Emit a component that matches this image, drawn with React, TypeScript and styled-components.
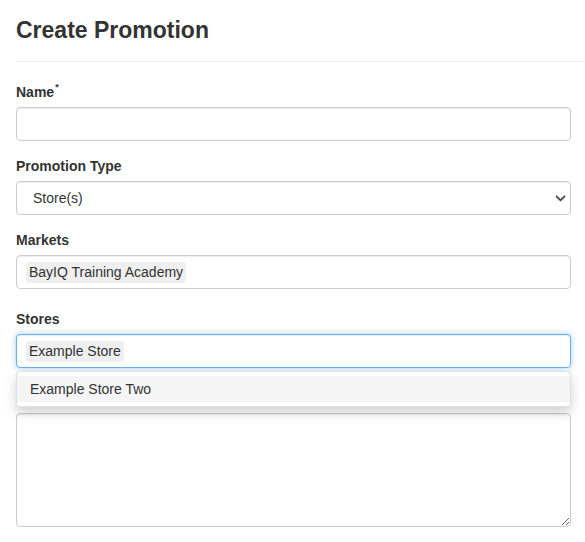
import React from 'react';
import styled, { createGlobalStyle, css } from 'styled-components';

const GlobalStyle = createGlobalStyle`
  html, body {
    margin: 0;
    padding: 0;
    background: #fff;
  }
  body {
    font-family: "Liberation Sans", Arial, Helvetica, sans-serif;
    font-size: 14px;
    line-height: 1.42857;
    color: #333;
  }
  * {
    box-sizing: border-box;
  }
`;

const Page = styled.div`
  padding-left: 16px;
`;

const Header = styled.div`
  padding: 17px 0 18px;
  border-bottom: 1px solid #eee;
`;

const Title = styled.h1`
  margin: 0;
  font-size: 23px;
  line-height: 26px;
  font-weight: 700;
  color: #333;
`;

const Form = styled.form`
  padding: 20px 14px 0 0;
  display: flex;
  flex-direction: column;
`;

const Group = styled.div<{ $gap?: number }>`
  position: relative;
  display: flex;
  flex-direction: column;
  margin-bottom: ${p => p.$gap ?? 15}px;
`;

const Label = styled.label`
  display: block;
  margin-bottom: 5px;
  font-weight: 700;
  line-height: 20px;
`;

const Required = styled.sup`
  font-size: 9px;
  line-height: 0;
  position: relative;
  top: -1px;
  margin-left: 1px;
`;

const fieldBase = css`
  width: 100%;
  border: 1px solid #ccc;
  border-radius: 4px;
  background: #fff;
  box-shadow: inset 0 1px 1px rgba(0, 0, 0, 0.075);
  font-family: inherit;
  font-size: 14px;
  color: #333;
`;

const TextInput = styled.input`
  ${fieldBase};
  height: 34px;
  padding: 6px 12px;
  outline: none;
`;

const SelectWrap = styled.div`
  ${fieldBase};
  height: 34px;
  display: flex;
  align-items: center;
  justify-content: space-between;
  padding: 0 4px 0 16px;
`;

const SelectValue = styled.span`
  line-height: 20px;
`;

const ChipField = styled.div<{ $focused?: boolean }>`
  ${fieldBase};
  height: 34px;
  display: flex;
  align-items: center;
  padding: 0 9px;
  ${p =>
    p.$focused &&
    css`
      border-color: #66afe9;
      box-shadow: inset 0 1px 1px rgba(0, 0, 0, 0.075),
        0 0 6px rgba(102, 175, 233, 0.6);
    `}
`;

const Chip = styled.span`
  display: inline-block;
  height: 21px;
  line-height: 21px;
  padding: 0 3px;
  background: #efefef;
  border-radius: 3px;
  color: #333;
`;

const Dropdown = styled.div`
  position: absolute;
  top: calc(100% + 3px);
  left: 0;
  right: 0;
  z-index: 10;
  padding: 4px 0;
  background: #fff;
  border: 1px solid rgba(0, 0, 0, 0.12);
  border-radius: 4px;
  box-shadow: 0 6px 12px rgba(0, 0, 0, 0.175);
`;

const Option = styled.div<{ $active?: boolean }>`
  height: 26px;
  line-height: 26px;
  padding: 0 13px;
  background: ${p => (p.$active ? '#f5f5f5' : '#fff')};
  color: #333;
`;

const TextArea = styled.textarea`
  ${fieldBase};
  display: block;
  height: 114px;
  padding: 6px 12px;
  resize: vertical;
  outline: none;
`;

const Chevron = () => (
  <svg width="11" height="7" viewBox="0 0 11 7" aria-hidden="true">
    <path d="M1.5 1.3 L5.5 5.3 L9.5 1.3" fill="none" stroke="#444" strokeWidth="1.8" strokeLinecap="round" strokeLinejoin="round" />
  </svg>
);

const App: React.FC = () => {
  return (
    <Page>
      <GlobalStyle />
      <Header>
        <Title>Create Promotion</Title>
      </Header>
      <Form onSubmit={e => e.preventDefault()}>
        <Group>
          <Label htmlFor="name">
            Name<Required>*</Required>
          </Label>
          <TextInput id="name" type="text" />
        </Group>

        <Group>
          <Label>Promotion Type</Label>
          <SelectWrap>
            <SelectValue>Store(s)</SelectValue>
            <Chevron />
          </SelectWrap>
        </Group>

        <Group $gap={20}>
          <Label>Markets</Label>
          <ChipField>
            <Chip>BayIQ Training Academy</Chip>
          </ChipField>
        </Group>

        <Group $gap={45}>
          <Label>Stores</Label>
          <ChipField $focused>
            <Chip>Example Store</Chip>
          </ChipField>
          <Dropdown>
            <Option $active>Example Store Two</Option>
          </Dropdown>
        </Group>

        <Group>
          <TextArea rows={5} />
        </Group>
      </Form>
    </Page>
  );
};

export default App;
